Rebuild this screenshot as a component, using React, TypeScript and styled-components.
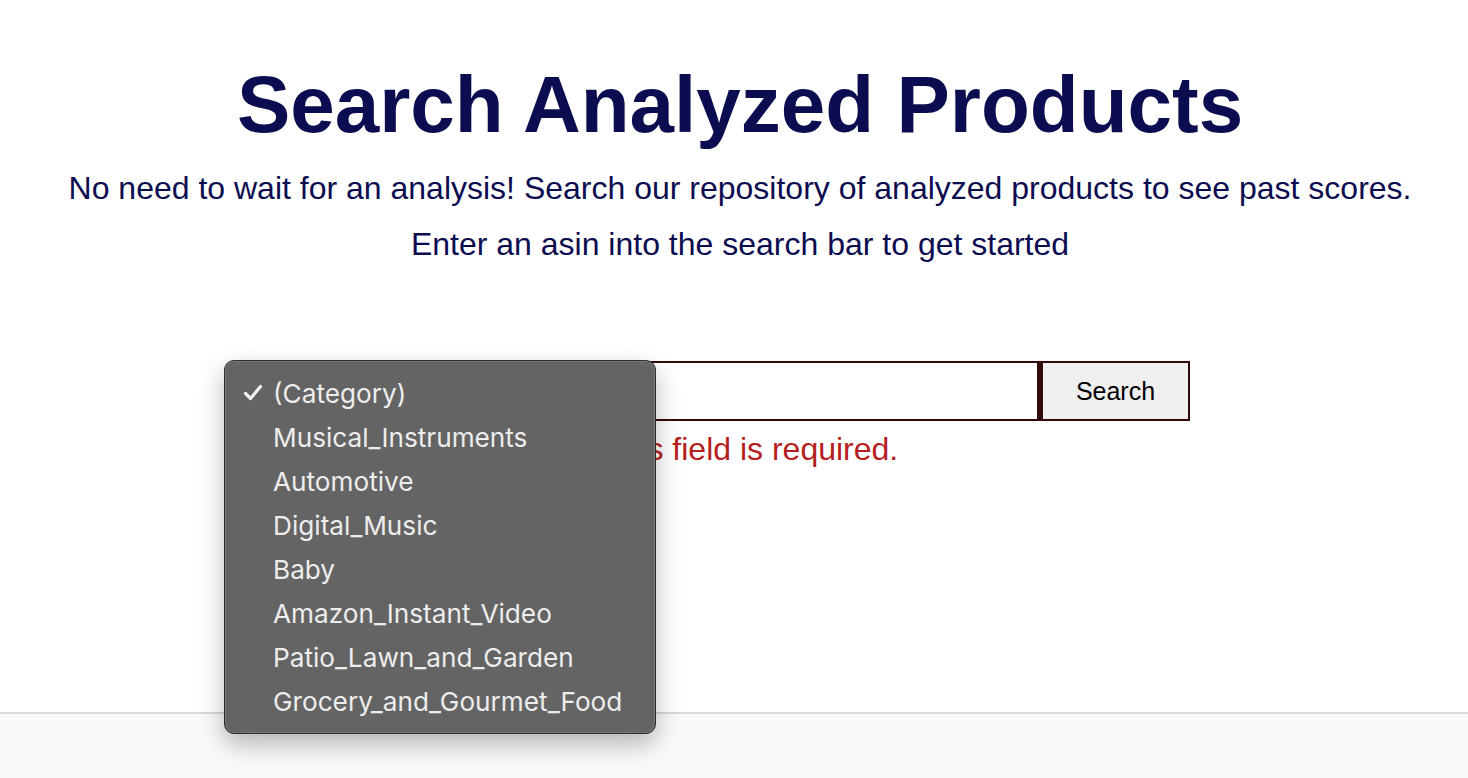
import React from "react";
import styled, { createGlobalStyle } from "styled-components";

const GlobalStyle = createGlobalStyle`
  html, body { margin: 0; padding: 0; background: #ffffff; }
  body { font-family: "Liberation Sans", Arial, sans-serif; }
  * { box-sizing: border-box; }
`;

const Page = styled.div`
  position: relative;
  min-height: 100vh;
  display: flex;
  flex-direction: column;
`;

const Main = styled.main`
  flex: 1;
  display: flex;
  flex-direction: column;
  align-items: center;
  text-align: center;
  padding-left: 12px;
  color: #0c0c50;
`;

const Title = styled.h1`
  margin: 65px 0 0;
  font-size: 80px;
  line-height: 80px;
  font-weight: 700;
  color: #0c0c50;
`;

const Lead = styled.p<{ $first?: boolean }>`
  margin: ${(p) => (p.$first ? "15px" : "0")} 0 0;
  font-size: 32px;
  line-height: 56px;
  color: #0c0c50;
`;

const Form = styled.form`
  margin-top: 89px;
  display: flex;
  align-items: flex-start;
  justify-content: center;
`;

const Select = styled.select`
  width: 313px;
  height: 60px;
  font-family: "Liberation Sans", Arial, sans-serif;
  font-size: 25px;
  border: 2px solid #330a0a;
  border-right: none;
  background: #ffffff;
  color: #000;
  padding: 0 12px;
`;

const Field = styled.div`
  display: flex;
  flex-direction: column;
  align-items: flex-start;
`;

const Input = styled.input`
  width: 437px;
  height: 60px;
  border: 2px solid #330a0a;
  border-right-width: 3px;
  font-size: 25px;
  padding: 0 10px;
  background: #fff;
  outline: none;
`;

const ErrorText = styled.span`
  margin-top: 12px;
  font-size: 32px;
  line-height: 32px;
  color: #b5201e;
`;

const Button = styled.button`
  width: 150px;
  height: 60px;
  border: 2px solid #330a0a;
  border-left-width: 3px;
  background: #efefef;
  font-family: "Liberation Sans", Arial, sans-serif;
  font-size: 25px;
  color: #000;
  padding: 0;
`;

const Footer = styled.footer`
  height: 66px;
  border-top: 2px solid #d9d9d9;
  background: #f9f9f9;
`;

const Menu = styled.ul`
  position: absolute;
  left: 224px;
  top: 360px;
  width: 432px;
  margin: 0;
  padding: 10px 0 10px;
  list-style: none;
  background: #646464;
  border: 1px solid #2e2e2e;
  border-radius: 10px;
  box-shadow: 0 10px 24px rgba(0, 0, 0, 0.28), inset 0 0 0 1px rgba(255, 255, 255, 0.12);
  font-family: Inter, "Noto Sans", sans-serif;
`;

const Item = styled.li`
  height: 44px;
  display: flex;
  align-items: center;
  padding-left: 48px;
  position: relative;
  font-size: 26.2px;
  color: #ededed;
`;

const Check = styled.svg`
  position: absolute;
  left: 18px;
  top: 13px;
`;

const categories = [
  "(Category)",
  "Musical_Instruments",
  "Automotive",
  "Digital_Music",
  "Baby",
  "Amazon_Instant_Video",
  "Patio_Lawn_and_Garden",
  "Grocery_and_Gourmet_Food",
];

export default function App() {
  return (
    <Page>
      <GlobalStyle />
      <Main>
        <Title>Search Analyzed Products</Title>
        <Lead $first>
          No need to wait for an analysis! Search our repository of analyzed products to see past scores.
        </Lead>
        <Lead>Enter an asin into the search bar to get started</Lead>
        <Form onSubmit={(e) => e.preventDefault()}>
          <Select defaultValue="">
            <option value="">(Category)</option>
          </Select>
          <Field>
            <Input type="text" />
            <ErrorText>This field is required.</ErrorText>
          </Field>
          <Button type="submit">Search</Button>
        </Form>
      </Main>
      <Footer />
      <Menu>
        {categories.map((c, i) => (
          <Item key={c}>
            {i === 0 && (
              <Check width="20" height="17" viewBox="0 0 20 17">
                <path
                  d="M2.5 9.5 L7.5 14.5 L17.5 2.5"
                  fill="none"
                  stroke="#f2f2f2"
                  strokeWidth="3.2"
                  strokeLinecap="round"
                  strokeLinejoin="round"
                />
              </Check>
            )}
            {c}
          </Item>
        ))}
      </Menu>
    </Page>
  );
}
